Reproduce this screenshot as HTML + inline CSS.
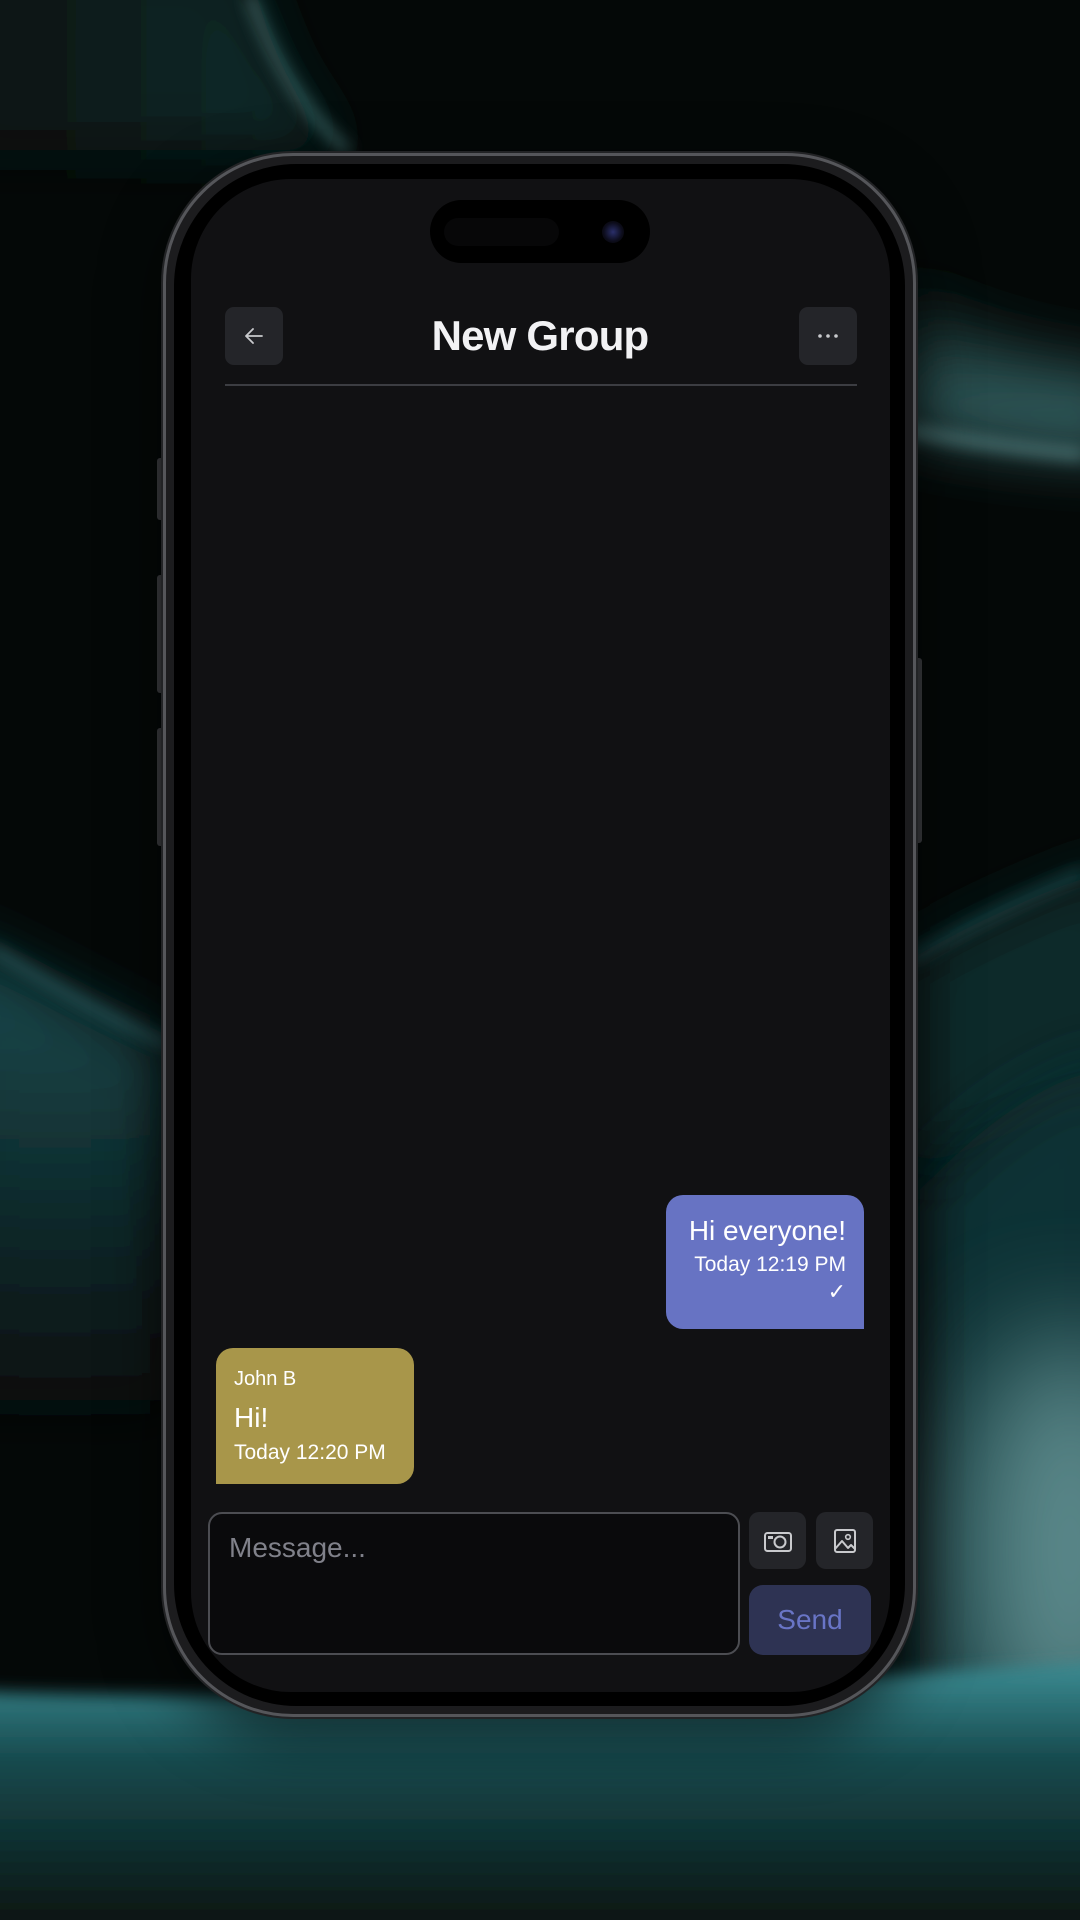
<!DOCTYPE html>
<html><head><meta charset="utf-8"><style>
*{margin:0;padding:0;box-sizing:border-box}
html,body{width:1080px;height:1920px;overflow:hidden}
body{background:#040807;font-family:"Liberation Sans",sans-serif;position:relative}
.bg{position:absolute;left:0;top:0}
.phone{position:absolute;left:163px;top:153px;width:753px;height:1564px;border-radius:130px;background:#1c1c1e;border:3px solid #55565a;box-shadow:0 0 0 2px #222325,0 20px 60px rgba(0,0,0,.6)}
.bezel{position:absolute;left:8px;top:8px;right:8px;bottom:8px;border-radius:122px;background:#000}
.screen{position:absolute;left:191px;top:179px;width:699px;height:1513px;border-radius:100px;background:#111113;overflow:hidden}
.btnside{position:absolute;background:#3a3b3e;border-radius:3px}
.island{position:absolute;left:430px;top:200px;width:220px;height:63px;border-radius:32px;background:#000}
.hb{position:absolute;top:307px;width:58px;height:58px;border-radius:9px;background:#242529}
.title{position:absolute;left:0;width:1080px;top:312px;text-align:center;color:#f2f2f4;font-weight:bold;font-size:42px;letter-spacing:-.8px}
.div{position:absolute;left:225px;top:384px;width:632px;height:2px;background:#3c3d42}
.blue{position:absolute;left:666px;top:1195px;width:198px;height:134px;background:#6773c3;border-radius:17px 17px 0 17px;color:#fff;text-align:right;padding:20px 18px 0 0}
.gold{position:absolute;left:216px;top:1348px;width:198px;height:136px;background:#a8964a;border-radius:17px 17px 17px 0;color:#fff;padding:20px 0 0 18px}
.input{position:absolute;left:208px;top:1512px;width:532px;height:143px;border-radius:14px;background:#0a0a0c;border:2px solid #4c4d52;color:#80818a;font-size:28px;padding:18px 0 0 19px}
.ib{position:absolute;top:1512px;width:57px;height:57px;border-radius:10px;background:#242529}
.send{position:absolute;left:749px;top:1585px;width:122px;height:70px;border-radius:14px;background:#2e3353;color:#6975c6;font-size:28px;text-align:center;line-height:70px}
</style></head><body>
<svg class="bg" width="1080" height="1920" viewBox="0 0 1080 1920">
<defs>
<filter id="b8" filterUnits="userSpaceOnUse" x="-200" y="-200" width="1480" height="2320"><feGaussianBlur stdDeviation="8"/></filter>
<filter id="b30" filterUnits="userSpaceOnUse" x="-200" y="-200" width="1480" height="2320"><feGaussianBlur stdDeviation="30"/></filter>
<filter id="b60" filterUnits="userSpaceOnUse" x="-200" y="-200" width="1480" height="2320"><feGaussianBlur stdDeviation="60"/></filter>
<linearGradient id="gl" x1="0" y1="0" x2="1" y2="0"><stop offset="0" stop-color="#07100f"/><stop offset="1" stop-color="#123030"/></linearGradient>
<linearGradient id="gb" x1="0" y1="0" x2="0" y2="1"><stop offset="0" stop-color="#3d8f96"/><stop offset=".3" stop-color="#174a4e"/><stop offset=".75" stop-color="#0a1a18"/><stop offset="1" stop-color="#060d0b"/></linearGradient>
<linearGradient id="gr" x1="0" y1="0" x2="0" y2="1"><stop offset="0" stop-color="#0a1816"/><stop offset="1" stop-color="#3b6e70"/></linearGradient>
<linearGradient id="gm" x1="0" y1="0" x2="0" y2="1"><stop offset="0" stop-color="#1a4e52"/><stop offset="1" stop-color="#071010"/></linearGradient>
</defs>
<rect width="1080" height="1920" fill="#040807"/>
<path d="M-50 -50H245C270 60 300 110 345 150L-50 150Z" fill="url(#gl)" filter="url(#b30)"/>
<path d="M250 -5C272 60 305 112 348 152" stroke="#6fb0b0" stroke-width="6" fill="none" filter="url(#b8)" opacity=".8"/>
<path d="M900 280C960 330 1030 360 1130 370V455C1020 450 960 440 900 430Z" fill="url(#gr)" filter="url(#b30)"/>
<path d="M905 430C970 442 1030 450 1085 455" stroke="#7cb3b4" stroke-width="8" fill="none" filter="url(#b8)" opacity=".7"/>
<path d="M-60 935C50 985 110 1020 170 1045V1400H-60Z" fill="url(#gm)" filter="url(#b30)"/>
<path d="M-10 948C50 985 110 1020 170 1045" stroke="#3a8288" stroke-width="5" fill="none" filter="url(#b8)"/>
<path d="M910 960C960 930 1020 900 1130 860V1100C1030 1120 960 1150 910 1180Z" fill="#0e2a2c" filter="url(#b30)"/>
<path d="M910 960C960 930 1020 900 1085 872" stroke="#2e7076" stroke-width="5" fill="none" filter="url(#b8)"/>
<path d="M920 1190C970 1140 1030 1080 1130 1060V1760H920Z" fill="#0f3336" filter="url(#b30)"/>
<ellipse cx="1070" cy="1550" rx="110" ry="220" fill="#6a9a9b" filter="url(#b60)" opacity=".85"/>
<path d="M-60 1690C200 1700 500 1700 1140 1660V1990H-60Z" fill="url(#gb)" filter="url(#b8)"/>
</svg>
<div class="btnside" style="left:157px;top:458px;width:8px;height:62px"></div>
<div class="btnside" style="left:157px;top:575px;width:8px;height:118px"></div>
<div class="btnside" style="left:157px;top:728px;width:8px;height:118px"></div>
<div class="btnside" style="left:914px;top:658px;width:8px;height:185px"></div>
<div class="phone"><div class="bezel"></div></div>
<div class="screen"></div>
<div class="island"><div style="position:absolute;left:14px;top:18px;width:115px;height:28px;border-radius:14px;background:#070708"></div><div style="position:absolute;left:172px;top:21px;width:22px;height:22px;border-radius:50%;background:radial-gradient(circle,#2a2f6a 0%,#0c0c1a 60%,#050505 100%)"></div></div>
<div class="hb" style="left:225px"><svg width="58" height="58" viewBox="0 0 58 58"><path d="M37 29H21M28 22l-7 7 7 7" stroke="#c9cacd" stroke-width="1.8" fill="none" stroke-linecap="round" stroke-linejoin="round"/></svg></div>
<div class="hb" style="left:799px"><svg width="58" height="58" viewBox="0 0 58 58"><circle cx="21" cy="29" r="1.8" fill="#c9cacd"/><circle cx="29" cy="29" r="1.8" fill="#c9cacd"/><circle cx="37" cy="29" r="1.8" fill="#c9cacd"/></svg></div>
<div class="title">New Group</div>
<div class="div"></div>
<div class="blue"><div style="font-size:28px;line-height:32px">Hi everyone!</div><div style="font-size:21px;line-height:28px;margin-top:4px">Today 12:19 PM</div><div style="font-size:22px;line-height:26px">✓</div></div>
<div class="gold"><div style="font-size:20px;line-height:22px">John B</div><div style="font-size:28px;line-height:32px;margin-top:12px">Hi!</div><div style="font-size:21px;line-height:26px;margin-top:6px">Today 12:20 PM</div></div>
<div class="input">Message...</div>
<div class="ib" style="left:749px"><svg width="57" height="57" viewBox="0 0 57 57"><rect x="16" y="21" width="26" height="18" rx="2.5" stroke="#c9cacd" stroke-width="2" fill="none"/><circle cx="31" cy="30" r="5.5" stroke="#c9cacd" stroke-width="2" fill="none"/><rect x="19" y="24" width="5" height="3" fill="#c9cacd"/></svg></div>
<div class="ib" style="left:816px"><svg width="57" height="57" viewBox="0 0 57 57"><rect x="19" y="18" width="20" height="22" rx="2" stroke="#c9cacd" stroke-width="2" fill="none"/><circle cx="32" cy="25" r="2.3" stroke="#c9cacd" stroke-width="1.6" fill="none"/><path d="M19 37l7-8 6 7 3-3 4 4" stroke="#c9cacd" stroke-width="2" fill="none" stroke-linejoin="round"/></svg></div>
<div class="send">Send</div>
</body></html>
